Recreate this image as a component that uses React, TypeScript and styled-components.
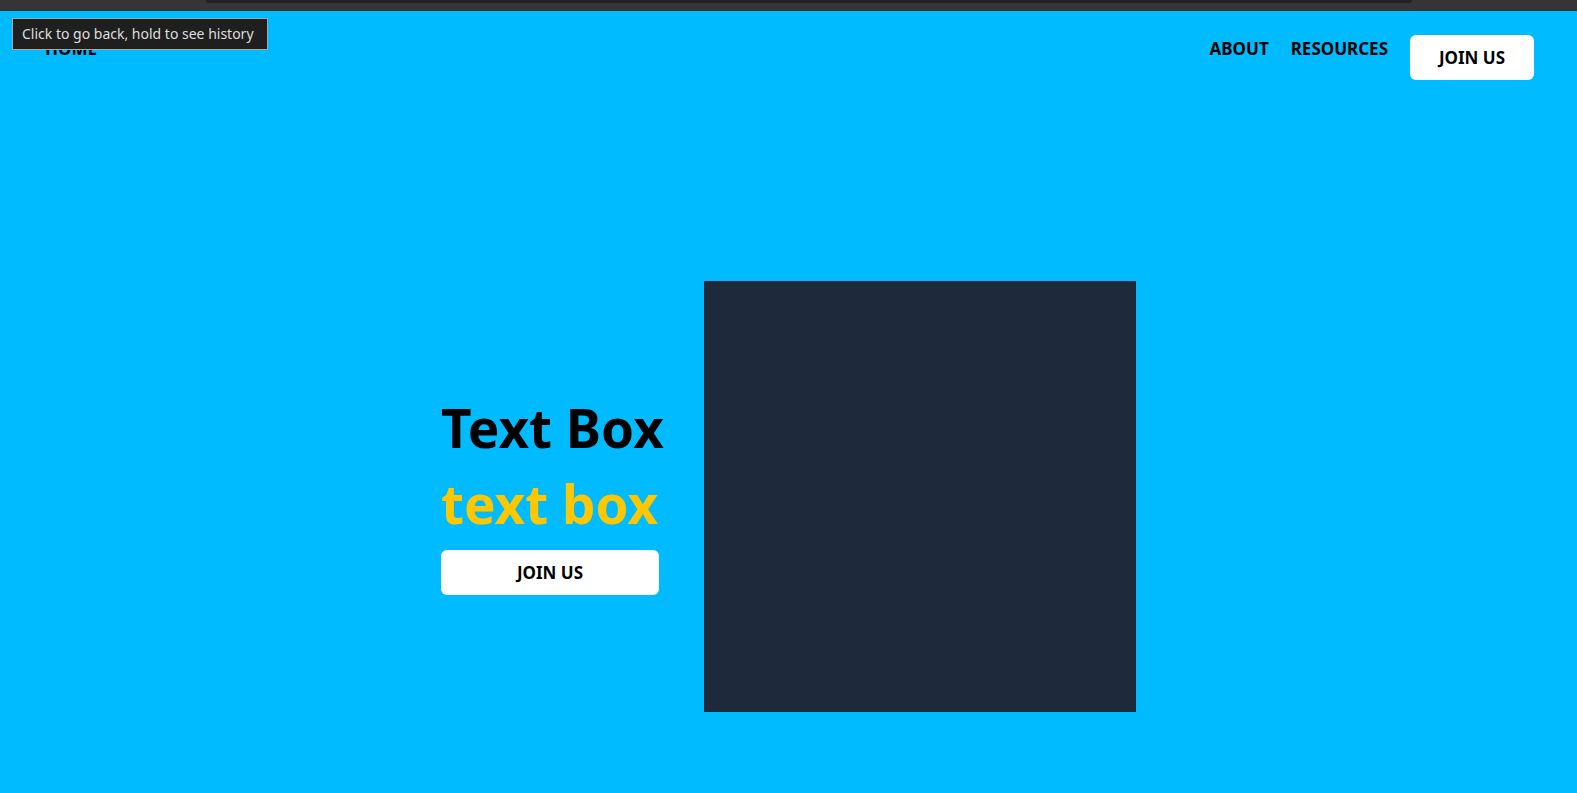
import React from "react";
import styled, { createGlobalStyle } from "styled-components";

const GlobalStyle = createGlobalStyle`
  html, body { margin: 0; padding: 0; }
  body {
    background: #00bbff;
    font-family: "Noto Sans", "Open Sans", Arial, sans-serif;
    overflow: hidden;
  }
  * { box-sizing: border-box; }
`;

const Page = styled.div`
  position: relative;
  width: 100%;
  height: 793px;
  background: #00bbff;
  display: flex;
  flex-direction: column;
`;

const BrowserBar = styled.div`
  height: 11px;
  background: #353535;
  position: relative;
  flex: none;
`;

const AddressEdge = styled.div`
  position: absolute;
  left: 206px;
  right: 165px;
  top: 0;
  height: 3px;
  background: #222224;
  border-radius: 0 0 8px 8px;
`;

const Tooltip = styled.div`
  position: absolute;
  left: 12px;
  top: 18px;
  width: 256px;
  height: 32px;
  background: #1f1f1f;
  border: 1px solid #a8a8a8;
  color: #dedede;
  font-family: "Noto Sans", sans-serif;
  font-size: 14px;
  line-height: 30px;
  padding-left: 9px;
  white-space: nowrap;
  z-index: 10;
`;

const Header = styled.header`
  display: flex;
  justify-content: space-between;
  align-items: flex-start;
  padding: 24px 43px 0 45px;
  height: 90px;
  flex: none;
`;

const NavLink = styled.a`
  color: #000;
  font-weight: 700;
  font-size: 17px;
  line-height: 22px;
  margin-top: 3px;
  text-decoration: none;
  white-space: nowrap;
`;

const NavRight = styled.nav`
  display: flex;
  align-items: flex-start;
  gap: 22px;
`;

const Button = styled.button<{ $wide?: boolean }>`
  background: #fff;
  border: none;
  border-radius: 6px;
  color: #000;
  font-family: inherit;
  font-weight: 700;
  font-size: 17px;
  width: ${(p) => (p.$wide ? "218px" : "124px")};
  height: 45px;
  padding: 0;
  cursor: pointer;
`;

const Hero = styled.main`
  flex: 1;
  display: flex;
  justify-content: center;
  align-items: center;
  gap: 45px;
  padding-top: 99px;
`;

const TextColumn = styled.div`
  width: 218px;
  display: flex;
  flex-direction: column;
  align-items: flex-start;
`;

const Title = styled.h1<{ $accent?: boolean }>`
  margin: 0;
  font-size: 53px;
  font-weight: 700;
  line-height: 76px;
  color: ${(p) => (p.$accent ? "#ffc700" : "#000")};
  white-space: nowrap;
`;

const ButtonRow = styled.div`
  margin-top: 8px;
  margin-bottom: 8px;
`;

const ImageBox = styled.div`
  width: 432px;
  height: 431px;
  background: #1e293b;
  flex: none;
`;

export default function App() {
  return (
    <Page>
      <GlobalStyle />
      <BrowserBar>
        <AddressEdge />
      </BrowserBar>
      <Tooltip>Click to go back, hold to see history</Tooltip>
      <Header>
        <NavLink href="#">HOME</NavLink>
        <NavRight>
          <NavLink href="#">ABOUT</NavLink>
          <NavLink href="#">RESOURCES</NavLink>
          <Button>JOIN US</Button>
        </NavRight>
      </Header>
      <Hero>
        <TextColumn>
          <Title>Text Box</Title>
          <Title $accent>text box</Title>
          <ButtonRow>
            <Button $wide>JOIN US</Button>
          </ButtonRow>
        </TextColumn>
        <ImageBox />
      </Hero>
    </Page>
  );
}
